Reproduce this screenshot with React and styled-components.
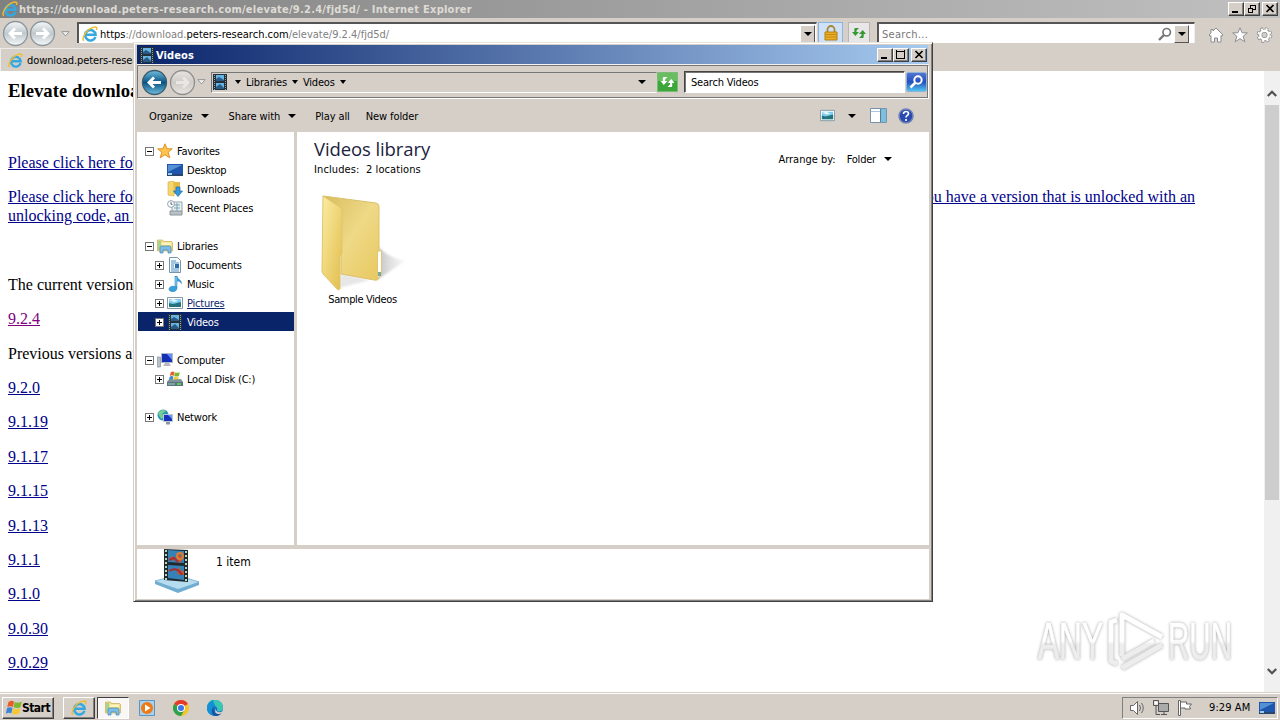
import React from "react";
import styled, { createGlobalStyle } from "styled-components";

const face = "#d5cfc8";

const GlobalStyle = createGlobalStyle`
  * {
    box-sizing: border-box;
  }
  body {
    margin: 0;
    overflow: hidden;
  }
  svg {
    display: block;
    flex: none;
  }
`;

const Screen = styled.div`
  position: relative;
  display: flex;
  flex-direction: column;
  width: 1280px;
  height: 720px;
  overflow: hidden;
  background: #fff;
  color: #000;
  font-family: "DejaVu Sans Condensed", "DejaVu Sans", sans-serif;
  font-stretch: condensed;
  font-size: 11px;
  line-height: 14px;
`;

const Text = styled.span`
  flex: none;
  padding-top: 2px;
  white-space: pre;
  letter-spacing: ${(p) => p.$ls ?? -0.2}px;
  color: ${(p) => p.$color || "inherit"};
  font-weight: ${(p) => (p.$bold ? 700 : 400)};
  font-size: ${(p) => p.$size || 11}px;
  text-decoration: ${(p) => (p.$underline ? "underline" : "none")};
`;

const Spacer = styled.div`
  flex: ${(p) => (p.$w ? "none" : 1)};
  width: ${(p) => p.$w || 0}px;
`;

/* browser */

const BrowserTitle = styled.div`
  display: flex;
  align-items: center;
  height: 18px;
  padding: 0 2px 0 2px;
  background: linear-gradient(90deg, #808080, #c0c0c0);
`;

const CaptionButton = styled.div`
  display: flex;
  align-items: center;
  justify-content: center;
  width: 16px;
  height: 14px;
  margin-left: ${(p) => p.$gap || 0}px;
  background: ${face};
  border: 1px solid;
  border-color: #fff #404040 #404040 #fff;
  box-shadow: inset -1px -1px #808080;
`;

const BrowserNav = styled.div`
  display: flex;
  align-items: flex-start;
  height: 30px;
  padding: 4px 7px 0 2px;
  background: ${face};
`;

const BackForward = styled.div`
  display: flex;
  align-items: center;
  width: 75px;
  margin-top: -2px;
`;

const AddressField = styled.div`
  display: flex;
  align-items: center;
  width: ${(p) => p.$w}px;
  height: 21px;
  padding: 0 1px 0 3px;
  background: #fff;
  border-top: 2px solid #555;
  border-left: 2px solid #555;
  border-right: 1px solid #eee;
`;

const DropButton = styled.div`
  display: flex;
  align-items: center;
  justify-content: center;
  width: 15px;
  height: 18px;
  background: ${face};
  border: 1px solid;
  border-color: #fff #555 #555 #fff;
`;

const SquareButton = styled.div`
  display: flex;
  align-items: center;
  justify-content: center;
  width: ${(p) => p.$w}px;
  height: 21px;
  margin-right: ${(p) => p.$mr}px;
  background: ${(p) => p.$bg};
  border: 1px solid ${(p) => p.$line};
`;

const ToolIcons = styled.div`
  display: flex;
  gap: 8px;
  padding: 5px 0 0 13px;
`;

const TabRow = styled.div`
  display: flex;
  height: 23px;
  background: ${face};
`;

const Tab = styled.div`
  display: flex;
  align-items: center;
  gap: 4px;
  width: 240px;
  padding-left: 7px;
  border-top: 1px solid #eeece8;
  border-left: 1px solid #eeece8;
`;

const PageArea = styled.div`
  display: flex;
  height: 621px;
`;

const Page = styled.div`
  flex: 1;
  padding: 8.5px 8px 0;
  overflow: hidden;
  font-family: "Liberation Serif", serif;
  font-size: 16px;
  line-height: 18.4px;
`;

const Heading = styled.h3`
  margin: 0 0 18.7px;
  font-size: 18.72px;
  line-height: 21.5px;
`;

const Paragraph = styled.p`
  margin: 0 0 16px;
  min-height: 18.4px;
`;

const PageLink = styled.a`
  color: ${(p) => (p.$visited ? "#800080" : "#00008b")};
  text-decoration: underline;
`;

const SplitLine = styled.span`
  display: flex;
  justify-content: space-between;
  width: 1187px;
`;

const ScrollTrack = styled.div`
  display: flex;
  flex-direction: column;
  align-items: center;
  width: 16px;
  background: #f0f0f0;
`;

const ScrollArrow = styled.div`
  display: flex;
  align-items: center;
  height: ${(p) => p.$h}px;
  padding-top: ${(p) => p.$pt || 0}px;
`;

const ScrollThumb = styled.div`
  width: 14px;
  height: 395px;
  margin-bottom: auto;
  background: #cdcdcd;
`;

/* explorer window */

const Window = styled.div`
  position: absolute;
  left: 133px;
  top: 42px;
  width: 800px;
  height: 560px;
  display: flex;
  flex-direction: column;
  padding: 2px 2px 1px 2px;
  background: ${face};
  border: 1px solid;
  border-color: #e8e4de #404040 #404040 #d5cfc8;
  box-shadow: inset 1px 1px #fff, inset -1px -1px #808080;
`;

const WindowTitle = styled.div`
  display: flex;
  align-items: center;
  height: 19px;
  margin: 0 2px 1px 1px;
  padding: 0 1px 0 2px;
  color: #fff;
  background: linear-gradient(90deg, #0a246a, #a6caf0);
`;

const WindowNav = styled.div`
  display: flex;
  align-items: center;
  height: 34px;
  margin: 0 1px 0 1px;
  padding: 0 1px 0 3px;
  border: 1px solid;
  border-color: #777 #fff #fff #777;
  box-shadow: 0 -1px #f4f2ee, inset -1px -1px #777;
`;

const Crumbs = styled.div`
  display: flex;
  align-items: center;
  width: 446px;
  height: 21px;
  border: 1px solid;
  border-color: #777 transparent #fff #777;
`;

const SearchBox = styled.div`
  display: flex;
  align-items: center;
  width: 221px;
  height: 22px;
  padding-left: 6px;
  background: #fff;
  border: 1px solid;
  border-color: #444 #fff #fff #444;
  box-shadow: inset 1px 1px #777;
`;

const Toolbar = styled.div`
  display: flex;
  align-items: center;
  height: 33px;
  padding: 0 16px 0 13px;
`;

const WindowBody = styled.div`
  display: flex;
  height: 413px;
  margin: 0 1px;
  background: #fff;
`;

const Tree = styled.div`
  width: 160px;
  padding: 9px 0 0 1px;
  border-right: 3px solid ${face};
`;

const TreeRow = styled.div`
  display: flex;
  align-items: center;
  height: 19px;
  margin-bottom: ${(p) => (p.$last ? 19 : 0)}px;
  padding-left: ${(p) => (p.$level ? 17 : 7)}px;
  color: ${(p) => (p.$selected ? "#fff" : "#000")};
  background: ${(p) => (p.$selected ? "#0a246a" : "transparent")};
`;

const ToggleCell = styled.div`
  width: 9px;
  padding-top: 2px;
`;

const IconCell = styled.div`
  width: 16px;
  margin: 0 4px 0 3px;
`;

const Library = styled.div`
  flex: 1;
  padding: 4px 37px 0 17px;
`;

const LibraryHead = styled.div`
  display: flex;
  justify-content: space-between;
`;

const LibraryTitle = styled.div`
  height: 27px;
  font-family: "Open Sans", sans-serif;
  font-stretch: normal;
  font-size: 18.5px;
  line-height: 25px;
  letter-spacing: -0.1px;
  color: #1c2340;
`;

const Arrange = styled.div`
  display: flex;
  align-items: center;
  padding-top: 5px;
`;

const FolderTile = styled.div`
  display: flex;
  flex-direction: column;
  align-items: center;
  width: 97px;
  margin-top: 16px;
`;

const FolderPreview = styled.div`
  padding-left: 5px;
`;

const Details = styled.div`
  display: flex;
  gap: 15px;
  height: 50px;
  margin: 4px 1px 0;
  padding-left: 16px;
  background: #fff;
`;

const DetailsText = styled.div`
  padding-top: 6px;
`;

/* taskbar */

const Taskbar = styled.div`
  display: flex;
  align-items: center;
  height: 28px;
  padding: 2px 2px 0 2px;
  background: ${face};
  border-top: 1px solid ${face};
  box-shadow: inset 0 1px #fff;
`;

const TaskButton = styled.div`
  display: flex;
  align-items: center;
  justify-content: center;
  width: ${(p) => p.$w}px;
  height: 22px;
  margin-right: ${(p) => p.$mr || 0}px;
  background: ${(p) => (p.$active ? "#f8f7f5" : "transparent")};
  border: 1px solid;
  border-color: ${(p) =>
    p.$flat ? "transparent" : p.$active ? "#404040 #fff #fff #404040" : "#fff #404040 #404040 #fff"};
  box-shadow: ${(p) => (p.$flat || p.$active ? "none" : "inset -1px -1px #808080")};
`;

const StartLabel = styled.span`
  font-size: 12px;
  font-weight: 700;
  letter-spacing: -0.5px;
`;

const Tray = styled.div`
  display: flex;
  align-items: center;
  width: 156px;
  height: 22px;
  padding-left: 6px;
  border: 1px solid;
  border-color: #808080 #fff #fff #808080;
`;

const Clock = styled.span`
  flex: 1;
  letter-spacing: 0.1px;
`;

const Watermark = styled.div`
  position: absolute;
  left: 1030px;
  top: 602px;
  filter: drop-shadow(0 0 1.5px rgba(0, 0, 0, 0.36));
`;

/* icons */

const IeIcon = ({ size = 16 }) => (
  <svg width={size} height={size} viewBox="0 0 16 16" fill="none">
    <path d="M13.4 10.8A5.2 5.2 0 1 1 13.6 8.8H4.2" stroke="#35a8e0" strokeWidth="2.5" />
    <path d="M1.8 14.8C-.8 11.8 4.5 3.6 11 1.4c3.2-1 4.4.2 3.4 2.6" stroke="#edbd2d" strokeWidth="1.5" />
  </svg>
);

const Arrow = ({ color = "#000", w = 8 }) => (
  <svg width={w} height="4" viewBox="0 0 8 4" preserveAspectRatio="none">
    <path d="M0 0h8L4 4z" fill={color} />
  </svg>
);

const HollowArrow = () => (
  <svg width="9" height="6" viewBox="0 0 9 6">
    <path d="M.8.6h7.4L4.5 5z" fill="#eee" stroke="#999" />
  </svg>
);

const Orb = ({ id, top, bottom, ring, arrow, flip }) => (
  <svg width="27" height="27" viewBox="0 0 27 27">
    <defs>
      <linearGradient id={id} x1="0" y1="0" x2="0" y2="1">
        <stop offset="0" stopColor={top} />
        <stop offset=".5" stopColor={bottom} />
        <stop offset="1" stopColor={top} />
      </linearGradient>
    </defs>
    <circle cx="13.5" cy="13.5" r="12" fill={`url(#${id})`} stroke={ring} strokeWidth="1.3" />
    <path
      d="M20 13.5H8.5M13 8.5l-5 5 5 5"
      transform={flip ? "rotate(180 13.5 13.5)" : undefined}
      fill="none"
      stroke={arrow}
      strokeWidth="2.8"
    />
  </svg>
);

const Glyph = ({ kind }) => (
  <svg width="12" height="10" viewBox="0 0 12 10" fill="none" stroke="#000" shapeRendering="crispEdges">
    {kind === "min" && <path d="M2 8h6" strokeWidth="2" />}
    {kind === "max" && <path d="M2 1h8M1.5 0v9M9.5 0v9M1 8.5h9M1 1.5h9" />}
    {kind === "restore" && <path d="M4 1h6M4 1.5h6M4.5 1v3M9.5 1v5M7 5.5h3M2 4h5M2 4.5h5M2.5 4v5M6.5 4v5M2 8.5h5" />}
    {kind === "close" && <path d="M2.5 1l7 7M9.5 1l-7 7" strokeWidth="1.7" shapeRendering="auto" />}
  </svg>
);

const RefreshArrows = ({ color = "#359a35" }) => (
  <svg width="16" height="14" viewBox="0 0 16 14" fill={color}>
    <path d="M4 2h4L5.5 4.5V6H8L4.3 10 1 6h2.3V3zM12 12H8l2.5-2.5V8H8l3.7-4L15 8h-2.3v3z" />
  </svg>
);

const LockIcon = () => (
  <svg width="14" height="16" viewBox="0 0 14 16">
    <path d="M3.5 8V4.5a3.5 3.5 0 0 1 7 0V8" fill="none" stroke="#a98730" strokeWidth="1.8" />
    <path d="M1 7h12v8H1z" fill="#eaae25" stroke="#b47f10" />
    <path d="M1 9.5h12M1 12h12" stroke="#c68b14" />
  </svg>
);

const Magnifier = ({ color = "#777", size = 14 }) => (
  <svg width={size} height={size} viewBox="0 0 14 14" fill="none" stroke={color}>
    <circle cx="8.7" cy="5.2" r="3.7" strokeWidth="1.7" />
    <path d="M6 8l-5 5" strokeWidth="2.4" />
  </svg>
);

const HomeIcon = () => (
  <svg width="16" height="16" viewBox="0 0 16 16">
    <path d="M8 1l7 7-1.2 1.2-.8-.7V15H9.5v-4h-3v4H3V8.500l-.8.7L1 8l2-2V2.500h2V4z" fill="#fff" stroke="#8d8d8d" />
  </svg>
);

const StarIcon = ({ fill = "#fff", stroke = "#8d8d8d" }) => (
  <svg width="16" height="16" viewBox="0 0 16 16">
    <path d="M8 .8l2.100 5h5.200l-4.100 3.500 1.600 5.500L8 11.700l-4.800 3.100 1.600-5.500L.7 5.800h5.200z" fill={fill} stroke={stroke} />
  </svg>
);

const GearIcon = () => (
  <svg width="17" height="16" viewBox="0 0 16 16" fill="none">
    <circle cx="8" cy="8" r="6.300" stroke="#8d8d8d" strokeWidth="3" strokeDasharray="2.800 2.148" />
    <circle cx="8" cy="8" r="4.300" stroke="#8d8d8d" strokeWidth="4" />
    <circle cx="8" cy="8" r="6" stroke="#fff" strokeWidth="2" strokeDasharray="2 2.712" strokeDashoffset="-.4" />
    <circle cx="8" cy="8" r="4.200" stroke="#fff" strokeWidth="2.400" />
  </svg>
);

const Chevron = ({ down }) => (
  <svg width="10" height="7" viewBox="0 0 10 7" fill="none">
    <path d={down ? "M.8 1L5 5.200 9.200 1" : "M.8 6L5 1.800 9.200 6"} stroke="#505050" strokeWidth="2.200" />
  </svg>
);

const Expander = ({ open }) => (
  <svg width="9" height="9" viewBox="0 0 9 9" shapeRendering="crispEdges">
    <path d="M.5.5h8v8h-8z" fill="#fff" stroke="#777" />
    <path d={open ? "M2 4.500h5" : "M2 4.500h5M4.500 2v5"} stroke="#000" />
  </svg>
);

const FilmIcon = () => (
  <svg width="16" height="16" viewBox="0 0 16 16">
    <path d="M1 0h14v16H1z" fill="#24303a" />
    <path d="M4 1h8v6H4zM4 9h8v6H4z" fill="#67b4e2" />
    <path d="M4 5l3-2 5 3v1H4zM4 13l4-3 4 4v1H4z" fill="#285b87" />
    <path d="M2.500 1v15M13.500 1v15" stroke="#8fa8a6" strokeDasharray="1 1" />
  </svg>
);

const ScreenIcon = () => (
  <svg width="16" height="16" viewBox="0 0 16 16">
    <path d="M0 2h16v11H0z" fill="#1d56ac" />
    <path d="M1 3h14L1 10z" fill="#5690d4" />
    <path d="M0 12h16v2H0z" fill="#28456e" />
    <path d="M1 11h4v2H1z" fill="#9ccae8" />
  </svg>
);

const DownloadsIcon = () => (
  <svg width="16" height="16" viewBox="0 0 16 16">
    <path d="M1 1l6-1v15l-6-1z" fill="#f3d66d" stroke="#d4ab3e" strokeWidth=".6" />
    <path d="M7 1h6v12H7z" fill="#e7bc45" />
    <path d="M9 6h4v4h2.500L11 15.500 6.500 10H9z" fill="#3797dd" stroke="#1d6bae" strokeWidth=".7" />
  </svg>
);

const RecentIcon = () => (
  <svg width="16" height="16" viewBox="0 0 16 16">
    <path d="M5 2h10v10H5z" fill="#e9f0f4" stroke="#94a3ac" />
    <path d="M7 5h6M7 8h6M10 3v8" stroke="#77a5b4" />
    <path d="M3 11h12v4H3z" fill="#bac1c4" stroke="#8b969c" />
    <circle cx="4" cy="4" r="3.400" fill="#fff" stroke="#96a3ad" />
    <path d="M4 2v2.300h1.500" stroke="#4c6b84" fill="none" />
  </svg>
);

const LibrariesIcon = ({ size = 16 }) => (
  <svg width={size} height={size} viewBox="0 0 16 16">
    <path d="M.5 2h5l1 1.500h8l1 1V13H.5z" fill="#f3dc86" stroke="#c9a956" strokeWidth=".7" />
    <path d="M1 3h3v9H1z" fill="#a7d490" />
    <path d="M5 4.500h9V7H5z" fill="#fff3bd" />
    <path d="M3 15V9.500Q3 8 5 8h7q2 0 2 1.500V15h-3v-3H6v3z" fill="#7dbde5" stroke="#4186b8" strokeWidth=".7" />
  </svg>
);

const DocumentIcon = () => (
  <svg width="16" height="16" viewBox="0 0 16 16">
    <path d="M2.500.500h8l3 3v12h-11z" fill="#fafdff" stroke="#7795a8" />
    <path d="M4 4h5M4 6h8M4 12h8M4 14h8M4 8h3M4 10h3" stroke="#4a90bd" />
    <path d="M8 7h4v4H8z" fill="#286da7" />
  </svg>
);

const MusicIcon = () => (
  <svg width="16" height="16" viewBox="0 0 16 16">
    <path d="M8 0h2c0 3 4.500 3.500 4.500 7.500-1-2-3-2.500-4.500-2.500v7c0 5-8 4.500-8 1.200 0-2.700 4-3.700 6-2.500z" fill="#36a0dc" stroke="#1b75b8" strokeWidth=".5" />
    <path d="M9 1v9" stroke="#9bd6f2" />
  </svg>
);

const PictureIcon = ({ size = 16 }) => (
  <svg width={size} height={size} viewBox="0 0 16 16">
    <path d="M.5 2.500h15v11H.5z" fill="#fff" stroke="#8496a2" />
    <path d="M2 4h12v8H2z" fill="#80cbee" />
    <path d="M2 8l4 1 8-2v5H2z" fill="#24747c" />
    <path d="M2 5l5 2 4-1-4-2z" fill="#e3f6fb" />
  </svg>
);

const ComputerIcon = () => (
  <svg width="16" height="16" viewBox="0 0 16 16">
    <path d="M0 5h3.500v10H0z" fill="#b7c1c8" stroke="#7d8890" strokeWidth=".6" />
    <path d="M4 1h12v10H4z" fill="#acb9c8" />
    <path d="M5 2h10v8H5z" fill="#152fb6" />
    <path d="M10 2h5v6z" fill="#668ef0" />
    <path d="M8 11h4l2 3H6z" fill="#b6b9c0" />
  </svg>
);

const Flag = ({ size = 16 }) => (
  <svg width={size} height={size} viewBox="0 0 16 16">
    <path d="M2.500 2c2-1.500 3.800-1.500 5.600-.3L6.900 7C5 6 3.500 6 1.200 7.200z" fill="#e85c28" />
    <path d="M8.800 2c2 1 4.300 1 7 -.3l-1.400 5.500c-2 1.200-4.500 1.200-6.900.1z" fill="#7cb82d" />
    <path d="M1 8.200c2-1.200 3.700-1.200 5.500-.2l-1.200 5.500C3.700 12.500 2 12.500-.2 13.800z" fill="#3b86d4" />
    <path d="M7.300 8.400c2 1 4.600 1 6.900-.2l-1.300 5.400c-2 1.200-4.700 1.200-6.900.1z" fill="#f8c72c" />
  </svg>
);

const DiskIcon = () => (
  <svg width="16" height="16" viewBox="0 0 16 16">
    <svg x="2" y="0" width="11" height="11">
      <Flag size={11} />
    </svg>
    <path d="M1 9l13-1 2 3v4H0v-4z" fill="#7e9499" />
    <path d="M0 11h16v4H0z" fill="#52777e" />
    <path d="M10 13h4" stroke="#76dd54" strokeWidth="1.500" />
    <path d="M1 13h7" stroke="#b2ccd0" />
  </svg>
);

const NetworkIcon = () => (
  <svg width="16" height="16" viewBox="0 0 16 16">
    <circle cx="6" cy="6" r="5.500" fill="#2997bd" />
    <path d="M1 4c3-4 6-3 8-2L5 5l2 3-3 2z" fill="#76cf8e" />
    <path d="M6 5h10v8H6z" fill="#bac7d5" />
    <path d="M7 6h8v6H7z" fill="#1832bb" />
    <path d="M11 6h4v4z" fill="#6f95f2" />
    <path d="M9 13h4v2.500H9z" fill="#8a97a7" />
  </svg>
);

const PaneIcon = () => (
  <svg width="17" height="15" viewBox="0 0 17 15">
    <path d="M.5.500h16v14H.5z" fill="#fff" stroke="#7693ab" />
    <path d="M1 3.500h9" stroke="#a9c6dc" />
    <path d="M11 1h5v13h-5z" fill="#7cbfda" />
    <path d="M10.500 1v13" stroke="#517d9a" />
  </svg>
);

const HelpIcon = () => (
  <svg width="16" height="16" viewBox="0 0 16 16">
    <circle cx="8" cy="8" r="7" fill="#2949b0" stroke="#7484b6" strokeWidth="1.500" />
    <path d="M5.500 6c0-3.500 5-3 5-.3C10.500 7.500 8 7.300 8 9.500M8 11v2" fill="none" stroke="#fff" strokeWidth="1.700" />
  </svg>
);

const GreenGo = () => (
  <svg width="21" height="20" viewBox="0 0 21 20">
    <path d="M.5.500h20v19H.5z" fill="#3da63b" stroke="#7abb78" />
    <path d="M1 1h19v8H1z" fill="#68bd60" />
    <g transform="translate(2.500 3)">
      <RefreshArrows color="#fff" />
    </g>
  </svg>
);

const BlueGo = () => (
  <svg width="21" height="20" viewBox="0 0 21 20">
    <defs>
      <linearGradient id="go" x1="0" y1="0" x2="0" y2="1">
        <stop offset="0" stopColor="#5577d0" />
        <stop offset=".5" stopColor="#2450be" />
        <stop offset="1" stopColor="#53cbf2" />
      </linearGradient>
    </defs>
    <rect x=".5" y=".5" width="20" height="19" rx="2" fill="url(#go)" stroke="#8eb2dc" />
    <circle cx="12" cy="8" r="3.700" fill="none" stroke="#fff" strokeWidth="2" />
    <path d="M9.500 10.500l-5 5" stroke="#fff" strokeWidth="2.500" />
  </svg>
);

const FolderArt = () => (
  <svg width="92" height="98" viewBox="0 0 92 98">
    <defs>
      <linearGradient id="front" x1="0" y1="0" x2="1" y2="1">
        <stop offset="0" stopColor="#fbeda3" />
        <stop offset="1" stopColor="#e2bd4d" />
      </linearGradient>
      <linearGradient id="inner" x1="0" y1="0" x2="1" y2="1">
        <stop offset="0" stopColor="#d9bd5e" />
        <stop offset=".5" stopColor="#efd987" />
        <stop offset="1" stopColor="#e8c85f" />
      </linearGradient>
      <linearGradient id="shade">
        <stop offset="0" stopColor="#a4a4a4" stopOpacity=".7" />
        <stop offset="1" stopColor="#ccc" stopOpacity=".15" />
      </linearGradient>
      <filter id="soft">
        <feGaussianBlur stdDeviation="1.200" />
      </filter>
    </defs>
    <g filter="url(#soft)">
      <path d="M60 54q8 10 26 14L58 87z" fill="url(#shade)" />
      <path d="M22 81l29 6-31 8z" fill="#ddd" opacity=".7" />
    </g>
    <path d="M4 3l53 7q3 1 3 3v70q0 5-5 4L22 81V56z" fill="url(#inner)" stroke="#dcc16c" />
    <path d="M58.500 58h4v24l-4 3z" fill="#fff" stroke="#e1c66f" />
    <path d="M59 79h3v4h-3z" fill="#78a8a5" />
    <path d="M4 3l17 11q2 2 2 5v41l-2 3v32q0 3-3 1L5 82q-2-2-2-4z" fill="url(#front)" stroke="#dfc46e" />
  </svg>
);

const FilmStand = () => (
  <svg width="48" height="44" viewBox="0 0 48 44">
    <path d="M2 32l22-6 22 7-21 9z" fill="#b6dcf0" stroke="#8ab9d6" />
    <path d="M2 32l23 8v4L2 35zM46 33l-21 7v4l21-8z" fill="#71add1" />
    <path d="M11 0l24 1v32l-24-2z" fill="#202a2e" />
    <path d="M15 1l16 1v12l-16-1zM15 16l16 1v14l-16-2z" fill="#3582b9" />
    <path d="M16 9l5 3v-5zM26 4l4 6-3 4-3-4zM26 18l3 5 2-2v5l-7-1z" fill="#c7562e" />
    <circle cx="27" cy="7" r="3" fill="none" stroke="#db7d33" strokeWidth="2" />
    <path d="M16 11l5-2 4 4M16 22q8-5 13 4" stroke="#a72e33" fill="none" strokeWidth="2" />
    <path d="M13 1v30M33 2v30" stroke="#b7d8bc" strokeWidth="2" strokeDasharray="2 2" />
  </svg>
);

const MediaIcon = () => (
  <svg width="16" height="16" viewBox="0 0 16 16">
    <path d="M.5.500h15v15H.5z" fill="#a8d1ef" stroke="#5b95c4" />
    <circle cx="8" cy="8" r="6" fill="#ee7a16" />
    <path d="M6 4.500v7L11.500 8z" fill="#fff" />
  </svg>
);

const ChromeIcon = () => (
  <svg width="16" height="16" viewBox="0 0 16 16">
    <circle cx="8" cy="8" r="8" fill="#f5c526" />
    <path d="M8 8L1.070 4A8 8 0 0 1 14.930 4z" fill="#e33b2e" />
    <path d="M8 8L1.070 4A8 8 0 0 0 8 16l3.500-6z" fill="#2fa04e" />
    <circle cx="8" cy="8" r="4" fill="#fff" />
    <circle cx="8" cy="8" r="3" fill="#3b78e7" />
  </svg>
);

const EdgeIcon = () => (
  <svg width="16" height="16" viewBox="0 0 16 16">
    <circle cx="8" cy="8" r="8" fill="#1672c4" />
    <path d="M0 7a8 8 0 0 1 16 1c0 3-3 4-6 3 1-2 0-5-3-5S1 7 0 9z" fill="#39c6b4" />
    <path d="M0 8C0 3 4 .5 7 0c-2 2 2 5 1 6-4 0-4 6 0 9-4 1-8-2-8-7z" fill="#1590d5" />
    <path d="M9 8c-1 2 1 4 3 4.300 1.500.2 2.500-.3 3.200-.8L16 16l-4-1c-3 0-5-3-3-7z" fill={face} />
    <path d="M7 8c-1 3 1 6 5 6 1 0 2-.5 2.500-1-1 2-4 3.500-7 2.800C4 14 4 9 7 8z" fill="#1254a4" />
  </svg>
);

const SpeakerIcon = () => (
  <svg width="17" height="16" viewBox="0 0 17 16" fill="none" stroke="#666">
    <path d="M1.500 5.500h3l4-4v13l-4-4h-3z" fill="#fff" />
    <path d="M10.500 5q2 3 0 6M12.500 3q3.500 5 0 10" />
  </svg>
);

const TrayNetIcon = () => (
  <svg width="17" height="16" viewBox="0 0 17 16" stroke="#555">
    <path d="M5.500 3.500h10v8h-10z" fill="#aaa" />
    <path d="M.5.500h5v5h-5zM3 6v8.500h4M8 14.500h6M11 12v2" fill="none" />
    <path d="M1.500 1.500h3v3h-3z" fill="#fff" stroke="none" />
  </svg>
);

const TrayFlagIcon = () => (
  <svg width="16" height="16" viewBox="0 0 16 16" fill="#fff" stroke="#666">
    <path d="M1.500.500h2v15h-2z" />
    <path d="M3.500 2h6v2h5l-2 2.500 1 2.500H8V8H3.500z" />
  </svg>
);

const AnyRun = () => (
  <svg width="210" height="78" viewBox="0 0 210 78">
    <defs>
      <linearGradient id="fade" gradientUnits="userSpaceOnUse" x1="0" y1="10" x2="0" y2="70">
        <stop offset=".48" stopColor="#fff" />
        <stop offset=".54" stopColor="#ededed" />
      </linearGradient>
    </defs>
    <g fill="url(#fade)" stroke="url(#fade)" strokeWidth=".7" fontFamily="Liberation Sans Narrow, Liberation Sans, sans-serif" fontSize="51">
      <text x="8" y="57" textLength="65" lengthAdjust="spacingAndGlyphs">ANY</text>
      <text x="138" y="57" textLength="64" lengthAdjust="spacingAndGlyphs">RUN</text>
    </g>
    <g stroke="url(#fade)" strokeWidth="5" fill="none" strokeLinejoin="round">
      <path d="M87 18l-6 2v39l6 3" />
      <path d="M92 54V13l40 22" />
      <path d="M92 57l32-18" />
      <path d="M92 66l40-23" />
    </g>
  </svg>
);

const treeItems = [
  { label: "Favorites", icon: <StarIcon fill="#ffc54a" stroke="#df922b" />, open: true },
  { label: "Desktop", icon: <ScreenIcon />, level: 1, leaf: true },
  { label: "Downloads", icon: <DownloadsIcon />, level: 1, leaf: true },
  { label: "Recent Places", icon: <RecentIcon />, level: 1, leaf: true, last: true },
  { label: "Libraries", icon: <LibrariesIcon />, open: true },
  { label: "Documents", icon: <DocumentIcon />, level: 1 },
  { label: "Music", icon: <MusicIcon />, level: 1 },
  { label: "Pictures", icon: <PictureIcon />, level: 1, hover: true },
  { label: "Videos", icon: <FilmIcon />, level: 1, selected: true, last: true },
  { label: "Computer", icon: <ComputerIcon />, open: true },
  { label: "Local Disk (C:)", icon: <DiskIcon />, level: 1, last: true },
  { label: "Network", icon: <NetworkIcon /> },
];

const versions = ["9.2.0", "9.1.19", "9.1.17", "9.1.15", "9.1.13", "9.1.1", "9.1.0", "9.0.30", "9.0.29", "9.0.24"];

const Browser = () => (
  <>
    <BrowserTitle>
      <IeIcon />
      <Spacer $w={1} />
      <Text $bold $color="#dedbd5" $ls={0.25}>
        https://download.peters-research.com/elevate/9.2.4/fjd5d/ - Internet Explorer
      </Text>
      <Spacer />
      <CaptionButton><Glyph kind="min" /></CaptionButton>
      <CaptionButton><Glyph kind="restore" /></CaptionButton>
      <CaptionButton $gap={2}><Glyph kind="close" /></CaptionButton>
    </BrowserTitle>
    <BrowserNav>
      <BackForward>
        <Orb id="b1" top="#f6f8f9" bottom="#bfc8cd" ring="#8c969c" arrow="#fff" />
        <Orb id="b2" top="#f6f8f9" bottom="#bfc8cd" ring="#8c969c" arrow="#fff" flip />
        <Spacer $w={5} />
        <HollowArrow />
      </BackForward>
      <AddressField $w={740}>
        <IeIcon />
        <Spacer $w={2} />
        <Text $ls={0}>https</Text>
        <Text $ls={0} $color="#808080">://download.</Text>
        <Text $ls={0}>peters-research.com</Text>
        <Text $ls={0} $color="#808080">/elevate/9.2.4/fjd5d/</Text>
        <Spacer />
        <DropButton><Arrow /></DropButton>
      </AddressField>
      <Spacer $w={1} />
      <SquareButton $w={25} $mr={5} $bg="#cfe1f7" $line="#8ab4e4"><LockIcon /></SquareButton>
      <SquareButton $w={22} $mr={7} $bg="#e9e6e8" $line="#b9b5b5"><RefreshArrows /></SquareButton>
      <AddressField $w={318}>
        <Text $color="#777" $ls={0.3}>Search...</Text>
        <Spacer />
        <Magnifier />
        <Spacer $w={2} />
        <DropButton><Arrow /></DropButton>
        <Spacer $w={4} />
      </AddressField>
      <ToolIcons>
        <HomeIcon />
        <StarIcon />
        <GearIcon />
      </ToolIcons>
    </BrowserNav>
    <TabRow>
      <Tab>
        <IeIcon size={15} />
        <Text $ls={-0.1}>download.peters-research.com</Text>
      </Tab>
    </TabRow>
    <PageArea>
      <Page>
        <Heading>Elevate downloads</Heading>
        <Paragraph />
        <Paragraph>
          <PageLink>Please click here for</PageLink>
        </Paragraph>
        <Paragraph>
          <SplitLine>
            <PageLink>Please click here for</PageLink>
            <PageLink>if you have a version that is unlocked with an</PageLink>
          </SplitLine>
          <PageLink>unlocking code, an upgrade</PageLink>
        </Paragraph>
        <Paragraph />
        <Paragraph>The current version is</Paragraph>
        <Paragraph>
          <PageLink $visited>9.2.4</PageLink>
        </Paragraph>
        <Paragraph>Previous versions are</Paragraph>
        {versions.map((v) => (
          <Paragraph key={v}>
            <PageLink>{v}</PageLink>
          </Paragraph>
        ))}
      </Page>
      <ScrollTrack>
        <ScrollArrow $h={34} $pt={10}><Chevron /></ScrollArrow>
        <ScrollThumb />
        <ScrollArrow $h={42}><Chevron down /></ScrollArrow>
      </ScrollTrack>
    </PageArea>
  </>
);

const Explorer = () => (
  <Window>
    <WindowTitle>
      <FilmIcon />
      <Spacer $w={1} />
      <Text $bold $ls={0.1}>Videos</Text>
      <Spacer />
      <CaptionButton><Glyph kind="min" /></CaptionButton>
      <CaptionButton><Glyph kind="max" /></CaptionButton>
      <CaptionButton $gap={2}><Glyph kind="close" /></CaptionButton>
    </WindowTitle>
    <WindowNav>
      <Orb id="w1" top="#71bfdf" bottom="#095383" ring="#3e5e70" arrow="#fff" />
      <Spacer $w={1} />
      <Orb id="w2" top="#e7e5e2" bottom="#cfcbc6" ring="#8f8f8f" arrow="#e9e7e4" flip />
      <Spacer $w={1} />
      <HollowArrow />
      <Spacer $w={5} />
      <Crumbs>
        <FilmIcon />
        <Spacer $w={7} />
        <Arrow w={6} />
        <Spacer $w={5} />
        <Text>Libraries</Text>
        <Spacer $w={5} />
        <Arrow w={6} />
        <Spacer $w={5} />
        <Text>Videos</Text>
        <Spacer $w={5} />
        <Arrow w={6} />
        <Spacer />
        <Arrow />
        <Spacer $w={10} />
      </Crumbs>
      <GreenGo />
      <Spacer />
      <SearchBox>
        <Text>Search Videos</Text>
      </SearchBox>
      <Spacer $w={1} />
      <BlueGo />
    </WindowNav>
    <Toolbar>
      <Text $ls={-0.1}>Organize</Text>
      <Spacer $w={8} />
      <Arrow />
      <Spacer $w={20} />
      <Text $ls={-0.1}>Share with</Text>
      <Spacer $w={8} />
      <Arrow />
      <Spacer $w={19} />
      <Text $ls={-0.1}>Play all</Text>
      <Spacer $w={16} />
      <Text $ls={-0.1}>New folder</Text>
      <Spacer />
      <PictureIcon size={15} />
      <Spacer $w={13} />
      <Arrow />
      <Spacer $w={14} />
      <PaneIcon />
      <Spacer $w={11} />
      <HelpIcon />
    </Toolbar>
    <WindowBody>
      <Tree>
        {treeItems.map((item) => (
          <TreeRow key={item.label} $level={item.level} $last={item.last} $selected={item.selected}>
            <ToggleCell>{!item.leaf && <Expander open={item.open} />}</ToggleCell>
            <IconCell>{item.icon}</IconCell>
            <Text $underline={item.hover} $color={item.hover ? "#0a246a" : undefined}>
              {item.label}
            </Text>
          </TreeRow>
        ))}
      </Tree>
      <Library>
        <LibraryHead>
          <div>
            <LibraryTitle>Videos library</LibraryTitle>
            <Text $ls={0.1}>Includes:  2 locations</Text>
          </div>
          <Arrange>
            <Text $ls={0}>Arrange by:</Text>
            <Spacer $w={11} />
            <Text>Folder</Text>
            <Spacer $w={8} />
            <Arrow />
          </Arrange>
        </LibraryHead>
        <FolderTile>
          <FolderPreview>
            <FolderArt />
          </FolderPreview>
          <Text $ls={-0.35}>Sample Videos</Text>
        </FolderTile>
      </Library>
    </WindowBody>
    <Details>
      <FilmStand />
      <DetailsText>
        <Text $size={12} $ls={0}>1 item</Text>
      </DetailsText>
    </Details>
  </Window>
);

const App = () => (
  <Screen>
    <GlobalStyle />
    <Browser />
    <Taskbar>
      <TaskButton $w={52} $mr={9}>
        <Flag size={16} />
        <StartLabel>Start</StartLabel>
      </TaskButton>
      <TaskButton $w={32} $mr={2}><IeIcon /></TaskButton>
      <TaskButton $w={32} $mr={2} $active><LibrariesIcon /></TaskButton>
      <TaskButton $w={32} $mr={2} $flat><MediaIcon /></TaskButton>
      <TaskButton $w={32} $mr={2} $flat><ChromeIcon /></TaskButton>
      <TaskButton $w={32} $flat><EdgeIcon /></TaskButton>
      <Spacer />
      <Tray>
        <SpeakerIcon />
        <Spacer $w={7} />
        <TrayNetIcon />
        <Spacer $w={7} />
        <TrayFlagIcon />
        <Spacer $w={16} />
        <Clock>9:29 AM</Clock>
        <ScreenIcon />
        <Spacer $w={2} />
      </Tray>
    </Taskbar>
    <Watermark>
      <AnyRun />
    </Watermark>
    <Explorer />
  </Screen>
);

export default App;
